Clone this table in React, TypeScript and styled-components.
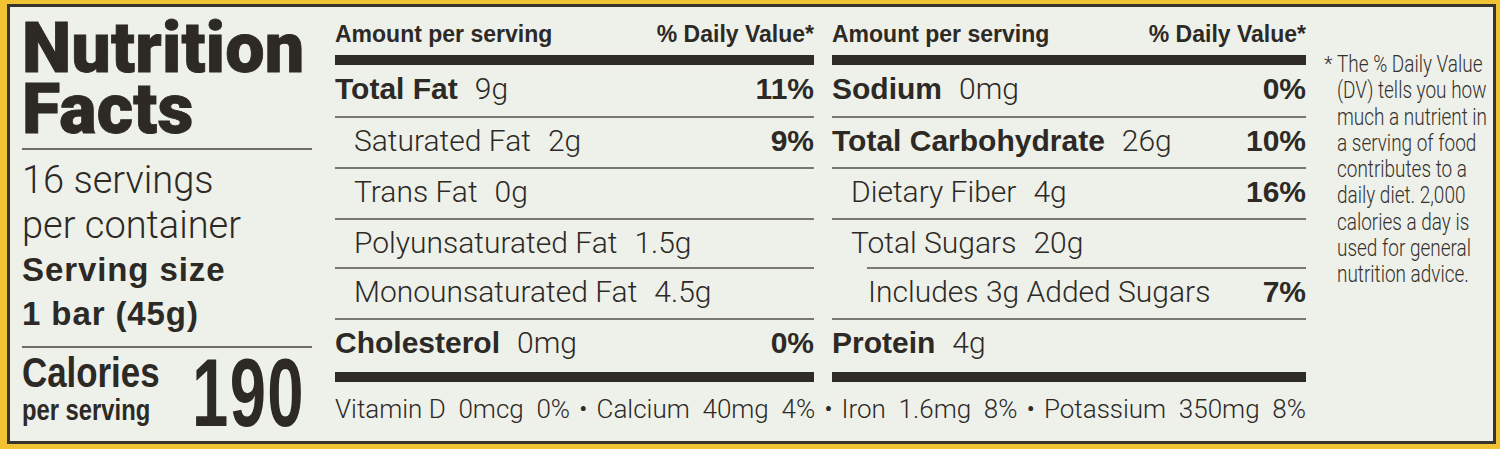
import React from 'react';
import styled, { createGlobalStyle } from 'styled-components';

const INK = '#2d2925';

const Global = createGlobalStyle`
  html, body { margin: 0; padding: 0; background: #f1c232; overflow: hidden; }
  body { font-family: Roboto, "Liberation Sans", sans-serif; color: ${INK}; }
`;

const Page = styled.div`
  box-sizing: border-box;
  height: 449px;
  padding: 4px 4px 5px 7px;
`;

const Frame = styled.main`
  box-sizing: border-box;
  height: 440px;
  border: 3px solid #38332e;
  background: #eef0ea;
  display: flex;
`;

/* condensed face: the label type is a condensed grotesque, so the
   available sans is narrowed horizontally */
const Squeeze = styled.span<{ $sx: number }>`
  display: inline-block;
  white-space: nowrap;
  transform: scaleX(${p => p.$sx});
  transform-origin: left top;
`;

/* ---------- left panel ---------- */
const Left = styled.section`
  box-sizing: border-box;
  width: 302px;
  flex: none;
  padding: 11px 0 0 12px;
  display: flex;
  flex-direction: column;
`;

const Title = styled.h1`
  margin: 0;
  font: 900 70px/61px Roboto, sans-serif;
  letter-spacing: 0.2px;
  -webkit-text-stroke: 0.8px ${INK};
`;

const PanelRule = styled.div<{ $mt: number }>`
  height: 2px;
  background: #6f6c67;
  margin-top: ${p => p.$mt}px;
`;

const Servings = styled.div`
  margin-top: 8px;
  font: 300 38px/45px Roboto, sans-serif;
`;

const ServingSize = styled.div`
  font: 700 33px/44px "Liberation Sans", sans-serif;
  letter-spacing: 0.9px;
`;

const CaloriesRow = styled.div`
  display: flex;
  justify-content: space-between;
  align-items: flex-start;
  padding: 5px 7px 0 0;
`;

const CaloriesLabel = styled.div`
  display: flex;
  flex-direction: column;
  align-items: flex-start;
`;

const CaloriesWord = styled(Squeeze)`
  font: 700 42px/40px "Liberation Sans", sans-serif;
`;

const PerServing = styled(Squeeze)`
  margin-top: 2px;
  font: 700 29px/30px "Liberation Sans", sans-serif;
`;

const CaloriesValue = styled(Squeeze)`
  width: 113px;
  font: 700 96px/80px "Liberation Sans", sans-serif;
  letter-spacing: 2px;
`;

/* ---------- nutrient table ---------- */
const Table = styled.div`
  width: 971px;
  flex: none;
  margin-left: 23px;
  padding-top: 13px;
  display: grid;
  grid-template-columns: 479px 474px;
  column-gap: 18px;
  align-content: start;
`;

const Column = styled.div`
  display: flex;
  flex-direction: column;
`;

const Header = styled.div`
  display: flex;
  justify-content: space-between;
  font: 700 23px/28px "Liberation Sans", sans-serif;
`;

const ThickBar = styled.div<{ $mt: number }>`
  height: 10px;
  margin-top: ${p => p.$mt}px;
  background: #2f2b27;
`;

const RowBox = styled.div<{ $h: number }>`
  height: ${p => p.$h}px;
  display: flex;
  flex-direction: column;
`;

const RowText = styled.div<{ $indent: number; $pt: number }>`
  flex: 1;
  display: flex;
  align-items: baseline;
  padding: ${p => p.$pt}px 0 0 ${p => p.$indent}px;
  line-height: 30px;
`;

const Nutrient = styled.span`
  font: 700 30px/30px "Liberation Sans", sans-serif;
`;

const SubNutrient = styled.span`
  font: 300 30px/30px Roboto, sans-serif;
`;

const Amount = styled.span`
  font: 300 30px/30px Roboto, sans-serif;
  margin-left: 17px;
`;

const Percent = styled.span`
  margin-left: auto;
  font: 700 30px/30px "Liberation Sans", sans-serif;
`;

const RowRule = styled.div<{ $indent: number }>`
  height: 2px;
  margin-left: ${p => p.$indent}px;
  background: #7a7873;
`;

const Micros = styled.div`
  grid-column: 1 / -1;
  margin-top: 12px;
  display: flex;
  justify-content: space-between;
  font: 300 26px/30px Roboto, sans-serif;
  white-space: pre;
`;

/* ---------- footnote ---------- */
const Note = styled.aside`
  flex: 1;
  min-width: 0;
  overflow: hidden;
  display: flex;
  align-items: flex-start;
  padding: 44px 0 0 18px;
  font: 300 24px/26.3px Roboto, sans-serif;
  color: #34302c;
`;

const Star = styled.span`
  font-size: 20px;
  margin-right: 4px;
`;

type Item = {
  label: string;
  bold?: boolean;
  amount?: string;
  dv?: string;
  indent?: number;
  ruleIndent?: number;
};

const HEIGHTS = [53, 51, 51, 49, 51, 52];
const PADS = [9, 8, 8, 8, 8, 8];

const LEFT_ITEMS: Item[] = [
  { label: 'Total Fat', bold: true, amount: '9g', dv: '11%' },
  { label: 'Saturated Fat', amount: '2g', dv: '9%', indent: 19 },
  { label: 'Trans Fat', amount: '0g', indent: 19 },
  { label: 'Polyunsaturated Fat', amount: '1.5g', indent: 19 },
  { label: 'Monounsaturated Fat', amount: '4.5g', indent: 19 },
  { label: 'Cholesterol', bold: true, amount: '0mg', dv: '0%' },
];

const RIGHT_ITEMS: Item[] = [
  { label: 'Sodium', bold: true, amount: '0mg', dv: '0%' },
  { label: 'Total Carbohydrate', bold: true, amount: '26g', dv: '10%' },
  { label: 'Dietary Fiber', amount: '4g', dv: '16%', indent: 19 },
  { label: 'Total Sugars', amount: '20g', indent: 19, ruleIndent: 35 },
  { label: 'Includes 3g Added Sugars', dv: '7%', indent: 36 },
  { label: 'Protein', bold: true, amount: '4g' },
];

const NOTE_LINES = [
  'The % Daily Value',
  '(DV) tells you how',
  'much a nutrient in',
  'a serving of food',
  'contributes to a',
  'daily diet. 2,000',
  'calories a day is',
  'used for general',
  'nutrition advice.',
];

function NutrientColumn({ items }: { items: Item[] }) {
  return (
    <Column>
      <Header>
        <span>Amount per serving</span>
        <span>% Daily Value*</span>
      </Header>
      <ThickBar $mt={7} />
      {items.map((it, i) => {
        const last = i === items.length - 1;
        const Label = it.bold ? Nutrient : SubNutrient;
        return (
          <RowBox key={it.label} $h={HEIGHTS[i]}>
            <RowText $indent={it.indent ?? 0} $pt={PADS[i]}>
              <Label>{it.label}</Label>
              {it.amount && <Amount>{it.amount}</Amount>}
              {it.dv && <Percent>{it.dv}</Percent>}
            </RowText>
            {!last && <RowRule $indent={it.ruleIndent ?? 0} />}
          </RowBox>
        );
      })}
      <ThickBar $mt={0} />
    </Column>
  );
}

export default function App() {
  return (
    <>
      <Global />
      <Page>
        <Frame>
          <Left>
            <Title>
              Nutrition
              <br />
              Facts
            </Title>
            <PanelRule $mt={8} />
            <Servings>
              16 servings
              <br />
              per container
            </Servings>
            <ServingSize>
              Serving size
              <br />1 bar (45g)
            </ServingSize>
            <PanelRule $mt={10} />
            <CaloriesRow>
              <CaloriesLabel>
                <CaloriesWord $sx={0.83}>Calories</CaloriesWord>
                <PerServing $sx={0.82}>per serving</PerServing>
              </CaloriesLabel>
              <CaloriesValue $sx={0.68}>190</CaloriesValue>
            </CaloriesRow>
          </Left>
          <Table>
            <NutrientColumn items={LEFT_ITEMS} />
            <NutrientColumn items={RIGHT_ITEMS} />
            <Micros>
              <span>Vitamin D  0mcg  0%</span>
              <span>•</span>
              <span>Calcium  40mg  4%</span>
              <span>•</span>
              <span>Iron  1.6mg  8%</span>
              <span>•</span>
              <span>Potassium  350mg  8%</span>
            </Micros>
          </Table>
          <Note>
            <Star>*</Star>
            <Squeeze $sx={0.79}>
              {NOTE_LINES.map((line, i) => (
                <React.Fragment key={line}>
                  {i > 0 && <br />}
                  {line}
                </React.Fragment>
              ))}
            </Squeeze>
          </Note>
        </Frame>
      </Page>
    </>
  );
}
